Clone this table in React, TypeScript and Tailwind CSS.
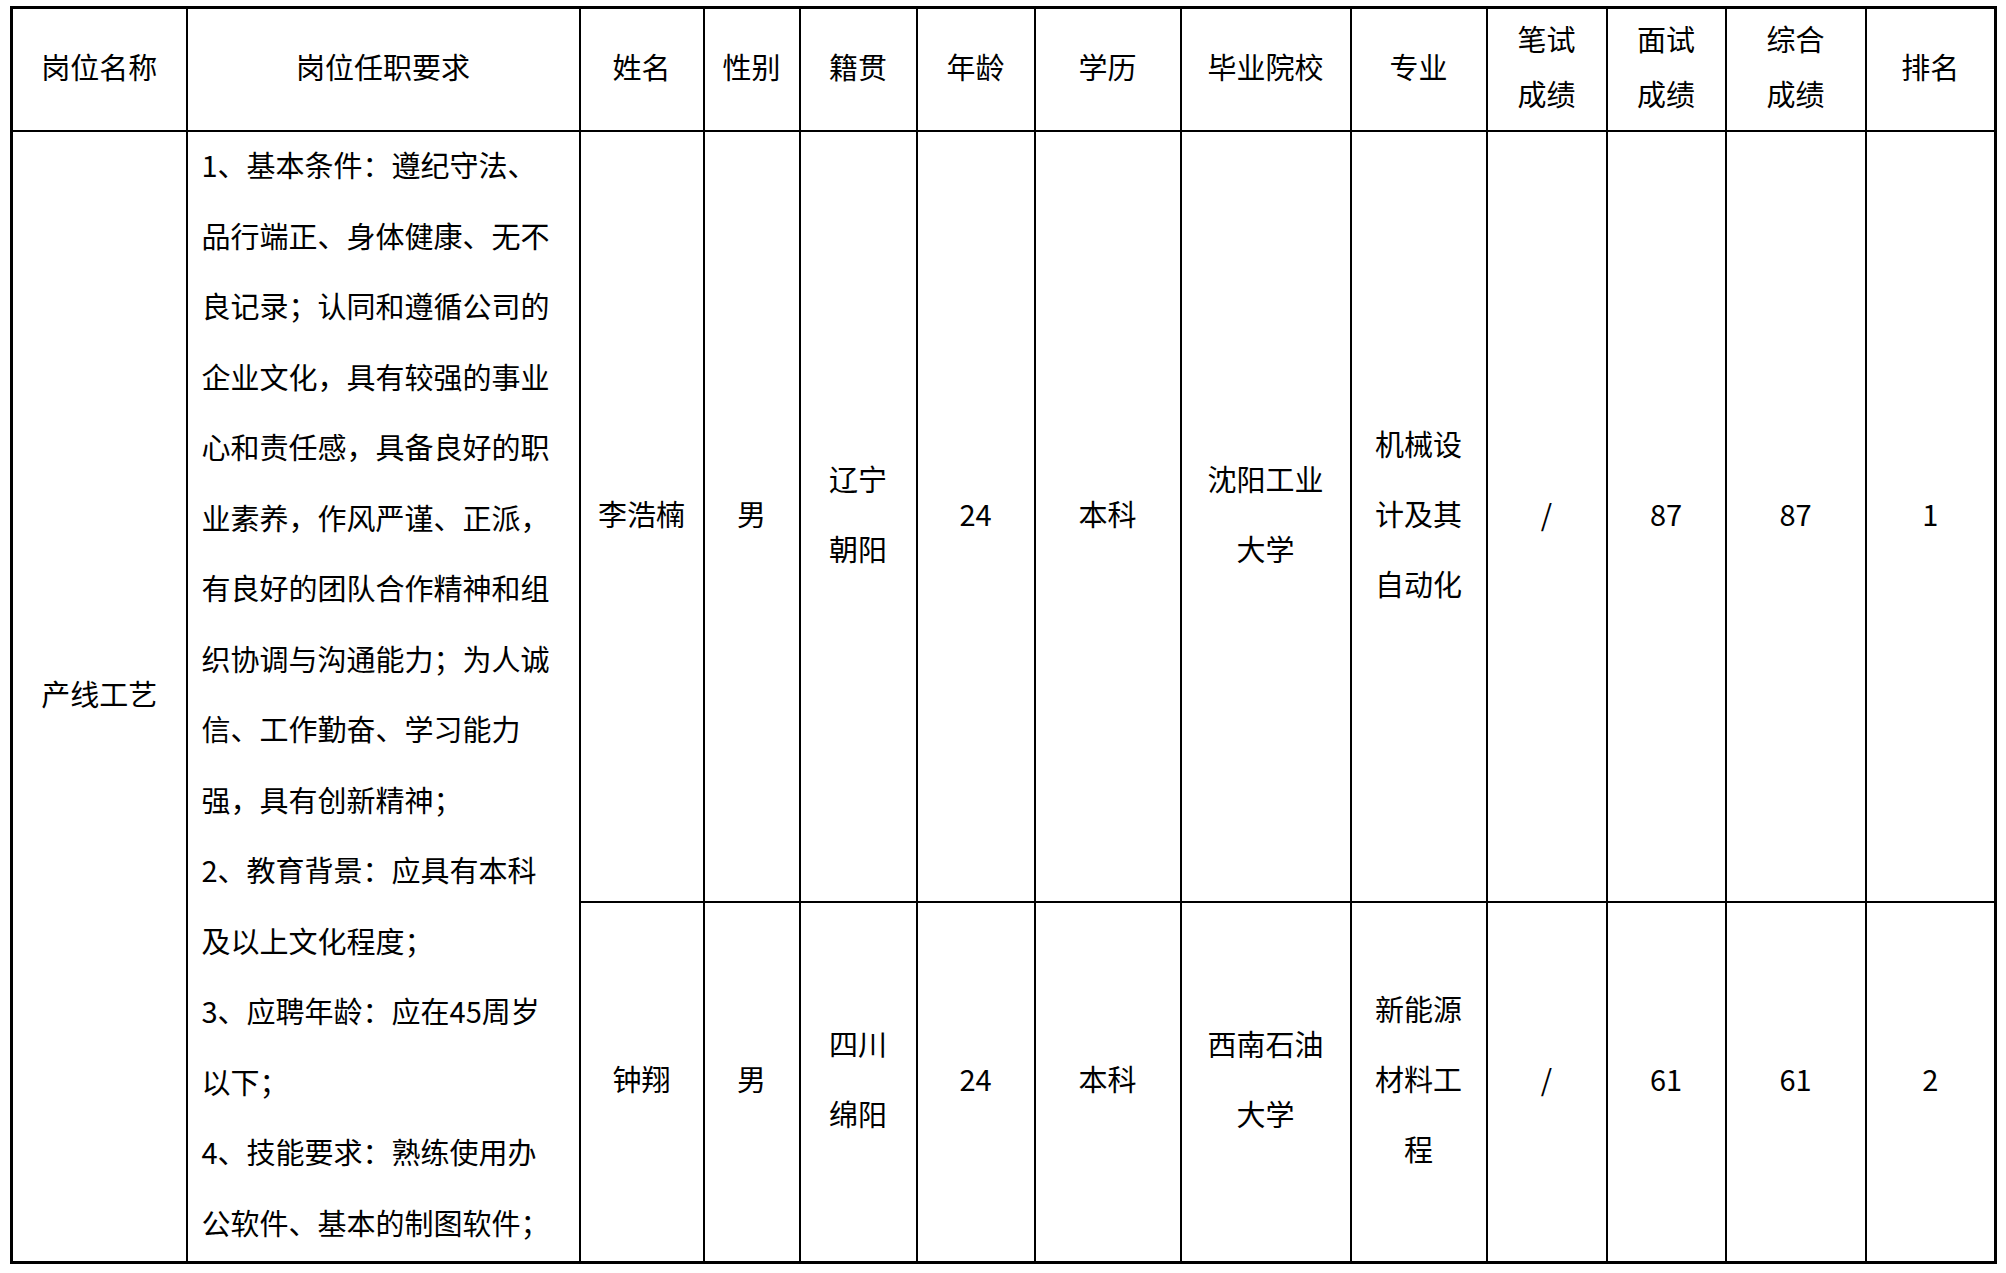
import React from 'react';

const font = { fontFamily: '"Noto Sans CJK SC", "Noto Sans", sans-serif' };

const headers: { w: string; lines: string[] }[] = [
  { w: 'w-[175px]', lines: ['岗位名称'] },
  { w: 'w-[393px]', lines: ['岗位任职要求'] },
  { w: 'w-[124px]', lines: ['姓名'] },
  { w: 'w-[96px]', lines: ['性别'] },
  { w: 'w-[117px]', lines: ['籍贯'] },
  { w: 'w-[118px]', lines: ['年龄'] },
  { w: 'w-[146px]', lines: ['学历'] },
  { w: 'w-[170px]', lines: ['毕业院校'] },
  { w: 'w-[136px]', lines: ['专业'] },
  { w: 'w-[120px]', lines: ['笔试', '成绩'] },
  { w: 'w-[119px]', lines: ['面试', '成绩'] },
  { w: 'w-[140px]', lines: ['综合', '成绩'] },
  { w: 'w-[130px]', lines: ['排名'] },
];

const requirements = [
  '1、基本条件：遵纪守法、',
  '品行端正、身体健康、无不',
  '良记录；认同和遵循公司的',
  '企业文化，具有较强的事业',
  '心和责任感，具备良好的职',
  '业素养，作风严谨、正派，',
  '有良好的团队合作精神和组',
  '织协调与沟通能力；为人诚',
  '信、工作勤奋、学习能力',
  '强，具有创新精神；',
  '2、教育背景：应具有本科',
  '及以上文化程度；',
  '3、应聘年龄：应在45周岁',
  '以下；',
  '4、技能要求：熟练使用办',
  '公软件、基本的制图软件；',
];

const candidates: { height: string; cells: string[][] }[] = [
  {
    height: 'h-[771px]',
    cells: [['李浩楠'], ['男'], ['辽宁', '朝阳'], ['24'], ['本科'], ['沈阳工业', '大学'], ['机械设', '计及其', '自动化'], ['/'], ['87'], ['87'], ['1']],
  },
  {
    height: 'h-[361px]',
    cells: [['钟翔'], ['男'], ['四川', '绵阳'], ['24'], ['本科'], ['西南石油', '大学'], ['新能源', '材料工', '程'], ['/'], ['61'], ['61'], ['2']],
  },
];

const cell = 'border-2 border-black text-center align-middle px-0 pt-0';

export default function App() {
  return (
    <div className="min-h-screen w-full bg-white text-black" style={font}>
      <div className="pt-[6px] pl-[10px]">
        <table className="table-fixed border-collapse border-[3px] border-black text-[29px]">
          <colgroup>
            {headers.map((h, i) => (
              <col key={i} className={h.w} />
            ))}
          </colgroup>
          <thead>
            <tr className="h-[123px]">
              {headers.map((h, i) => (
                <th key={i} className={`${cell} pb-[6px] font-normal leading-[55px]`}>
                  {h.lines.map((l) => (
                    <div key={l}>{l}</div>
                  ))}
                </th>
              ))}
            </tr>
          </thead>
          <tbody>
            {candidates.map((c, ri) => (
              <tr key={ri} className={c.height}>
                {ri === 0 && (
                  <>
                    <td rowSpan={2} className={`${cell} pb-[6px]`}>
                      产线工艺
                    </td>
                    <td rowSpan={2} className={`${cell} pb-0 text-left pl-[14px] leading-[70.5px]`}>
                      <div className="mt-[-3px] mb-[3px]">
                        {requirements.map((line, i) => (
                          <div key={i} className="whitespace-nowrap">
                            {line}
                          </div>
                        ))}
                      </div>
                    </td>
                  </>
                )}
                {c.cells.map((lines, i) => (
                  <td key={i} className={`${cell} pb-[7px] leading-[70px]`}>
                    {lines.map((l, j) => (
                      <div key={j}>{l}</div>
                    ))}
                  </td>
                ))}
              </tr>
            ))}
          </tbody>
        </table>
      </div>
    </div>
  );
}
